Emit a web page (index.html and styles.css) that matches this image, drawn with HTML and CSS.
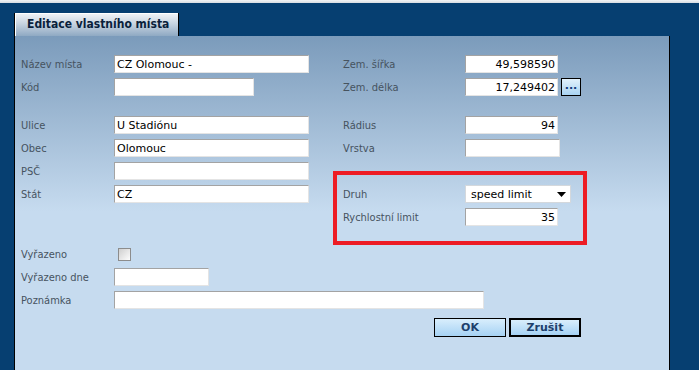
FILE: index.html
```html
<!DOCTYPE html>
<html lang="cs">
<head>
    <meta charset="UTF-8">
    <meta name="viewport" content="width=device-width, initial-scale=1.0">
    <title>Editace vlastního místa</title>
    <link rel="stylesheet" href="styles.css">
</head>
<body>
    <div class="top-strip"></div>

    <div class="window">
        <div class="tab">Editace vlastního místa</div>

        <div class="panel">
            <div class="columns">
                <!-- left column -->
                <div class="col col-left">
                    <div class="row"><label>Název místa</label><input class="field wide" value="CZ Olomouc -"></div>
                    <div class="row"><label>Kód</label><input class="field code" value=""></div>
                    <div class="spacer"></div>
                    <div class="row"><label>Ulice</label><input class="field wide" value="U Stadiónu"></div>
                    <div class="row"><label>Obec</label><input class="field wide" value="Olomouc"></div>
                    <div class="row"><label>PSČ</label><input class="field wide" value=""></div>
                    <div class="row"><label>Stát</label><input class="field wide" value="CZ"></div>
                </div>

                <!-- right column -->
                <div class="col col-right">
                    <div class="row"><label>Zem. šířka</label><input class="field num" value="49,598590"></div>
                    <div class="row"><label>Zem. délka</label><input class="field num" value="17,249402"><button class="pick">...</button></div>
                    <div class="spacer"></div>
                    <div class="row"><label>Rádius</label><input class="field num" value="94"></div>
                    <div class="row"><label>Vrstva</label><input class="field num vrstva" value=""></div>
                    <div class="row"></div>
                    <div class="row">
                        <label>Druh</label>
                        <div class="select">
                            <span>speed limit</span>
                            <svg width="9" height="5" viewBox="0 0 9 5"><path d="M0 0h9L4.5 5z" fill="#000"/></svg>
                        </div>
                    </div>
                    <div class="row"><label>Rychlostní limit</label><input class="field num" value="35"></div>
                </div>
            </div>

            <div class="bottom">
                <div class="row"><label>Vyřazeno</label><span class="check"></span></div>
                <div class="row"><label>Vyřazeno dne</label><input class="field date" value=""></div>
                <div class="row"><label>Poznámka</label><input class="field note" value=""></div>
            </div>

            <div class="actions">
                <button class="btn">OK</button>
                <button class="btn btn-default">Zrušit</button>
            </div>

            <div class="highlight"></div>
        </div>
    </div>
</body>
</html>
```

FILE: styles.css
```css
body {
    margin: 0;
    height: 370px;
    background: #063f71;
    font-family: 'DejaVu Sans', Verdana, sans-serif;
    overflow: hidden;
}

.top-strip {
    height: 3px;
    background: linear-gradient(#f2f4f6, #d6dce2);
}

.window {
    padding: 10px 0 0 14px;
}

.tab {
    display: inline-block;
    box-sizing: border-box;
    width: 165px;
    height: 23px;
    padding: 4px 0 0 12px;
    border-left: 1px solid #000;
    border-right: 1px solid #000;
    box-shadow: inset 1px 1px 0 #fff;
    background: linear-gradient(#f2f5f8 0%, #c9d5e1 45%, #8fa9c3 100%);
    color: #0a1f3c;
    font-family: 'DejaVu Sans Condensed', 'DejaVu Sans', sans-serif;
    font-weight: bold;
    font-size: 12px;
    vertical-align: top;
}

.panel {
    position: relative;
    box-sizing: border-box;
    width: 656px;
    height: 335px;
    padding: 19px 0 0 6px;
    border-left: 1px solid #000;
    border-right: 1px solid #000;
    background: linear-gradient(#7b9bbb 0, #c6dbef 175px, #c6dbef);
}

.columns {
    display: flex;
}

.col-left {
    width: 322px;
}

.row {
    display: flex;
    align-items: center;
    height: 18px;
    margin-bottom: 5px;
}

.spacer {
    height: 15px;
}

label {
    width: 93px;
    flex: none;
    color: #46535f;
    font-family: 'DejaVu Sans Condensed', 'DejaVu Sans', sans-serif;
    font-size: 11px;
}

.col-right label {
    width: 122px;
}

.field {
    box-sizing: border-box;
    height: 18px;
    margin: 0;
    padding: 0 2px;
    border: 1px solid;
    border-color: #a3a3a3 #e4e4e4 #e4e4e4 #a3a3a3;
    background: #fff;
    color: #000;
    font-family: 'DejaVu Sans', Verdana, sans-serif;
    font-size: 11px;
    outline: none;
}

.wide { width: 195px; }
.code { width: 140px; }
.date { width: 95px; }
.note { width: 370px; }

.num {
    width: 93px;
    text-align: right;
}

.vrstva { width: 95px; }

.pick {
    box-sizing: border-box;
    width: 20px;
    height: 18px;
    margin-left: 3px;
    padding: 0 0 3px;
    border: 1px solid #000;
    background: linear-gradient(#e2f1fc, #a9d3f2);
    color: #123a7a;
    font-family: 'DejaVu Sans', sans-serif;
    font-weight: bold;
    font-size: 11px;
    line-height: 1;
}

.select {
    box-sizing: border-box;
    display: flex;
    align-items: center;
    justify-content: space-between;
    width: 106px;
    height: 18px;
    padding: 0 4px 0 5px;
    border: 1px solid #d4d8dc;
    background: #fff;
    font-size: 11px;
    color: #000;
}

.bottom {
    margin-top: 14px;
}

.check {
    box-sizing: border-box;
    width: 13px;
    height: 13px;
    margin-left: 4px;
    border: 1px solid #8c8c8c;
    background: linear-gradient(135deg, #cfcfcf, #fdfdfd);
}

.actions {
    display: flex;
    gap: 3px;
    margin: 9px 0 0 413px;
}

.btn {
    box-sizing: border-box;
    width: 72px;
    height: 19px;
    padding: 0;
    border: 1px solid #000;
    background: linear-gradient(#d9eefc, #a6d2f4);
    color: #1d3f6b;
    font-family: 'DejaVu Sans', sans-serif;
    font-weight: bold;
    font-size: 11px;
}

.btn-default {
    border-width: 2px;
}

.highlight {
    position: absolute;
    left: 318px;
    top: 135px;
    width: 254px;
    height: 74px;
    box-sizing: border-box;
    border: 4px solid #ed1c24;
}
```
